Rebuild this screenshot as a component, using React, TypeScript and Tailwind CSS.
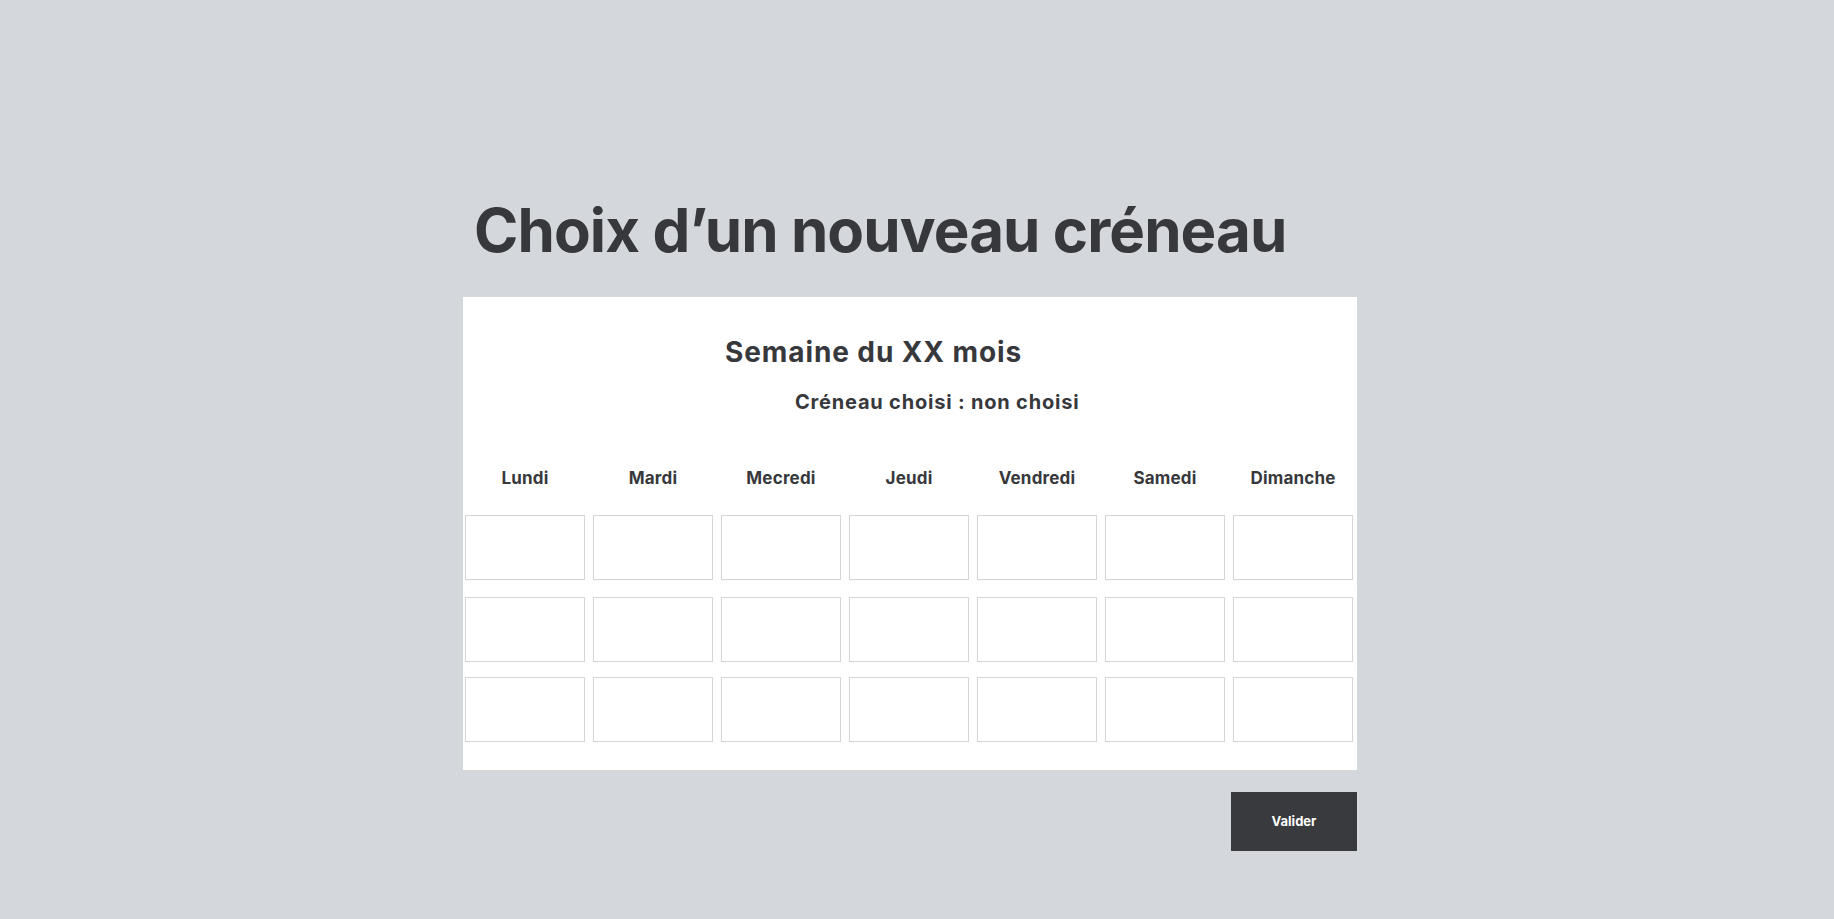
import React from "react";

const days = ["Lundi", "Mardi", "Mecredi", "Jeudi", "Vendredi", "Samedi", "Dimanche"];

function Row({ className }: { className: string }) {
  return (
    <div className={`grid grid-cols-7 gap-x-[8px] ${className}`}>
      {days.map((d) => (
        <button key={d} type="button" className="h-[65px] border border-[#d4d5d9] bg-white" aria-label={d} />
      ))}
    </div>
  );
}

export default function App() {
  return (
    <div
      className="min-h-screen w-full bg-[#d4d7dc] pl-[463px] text-[#37383c]"
      style={{ fontFamily: "Inter, 'Noto Sans', sans-serif" }}
    >
      <div className="w-[894px] pt-[200px] pb-[68px]">
        <h1 className="pl-[11px] text-[60px] font-bold leading-none tracking-[-0.9px]">
          Choix d’un nouveau créneau
        </h1>
        <div className="mt-[37px] bg-white pt-[41px] pb-[28px]">
          <h2 className="pl-[262px] text-[28px] font-bold leading-none tracking-[0.9px]">
            Semaine du XX mois
          </h2>
          <p className="mt-[26px] pl-[332px] text-[20px] font-bold leading-none tracking-[0.8px]">
            Créneau choisi : non choisi
          </p>
          <div className="ml-[2px] w-[888px]">
            <div className="mt-[58px] grid grid-cols-7 gap-x-[8px]">
              {days.map((d) => (
                <div key={d} className="text-center text-[17px] font-bold leading-none tracking-[0.2px]">
                  {d}
                </div>
              ))}
            </div>
            <Row className="mt-[28px]" />
            <Row className="mt-[17px]" />
            <Row className="mt-[15px]" />
          </div>
        </div>
        <div className="mt-[22px] flex justify-end">
          <button
            type="button"
            className="h-[59px] w-[126px] bg-[#393a3e] text-[13px] font-bold text-white"
          >
            Valider
          </button>
        </div>
      </div>
    </div>
  );
}
